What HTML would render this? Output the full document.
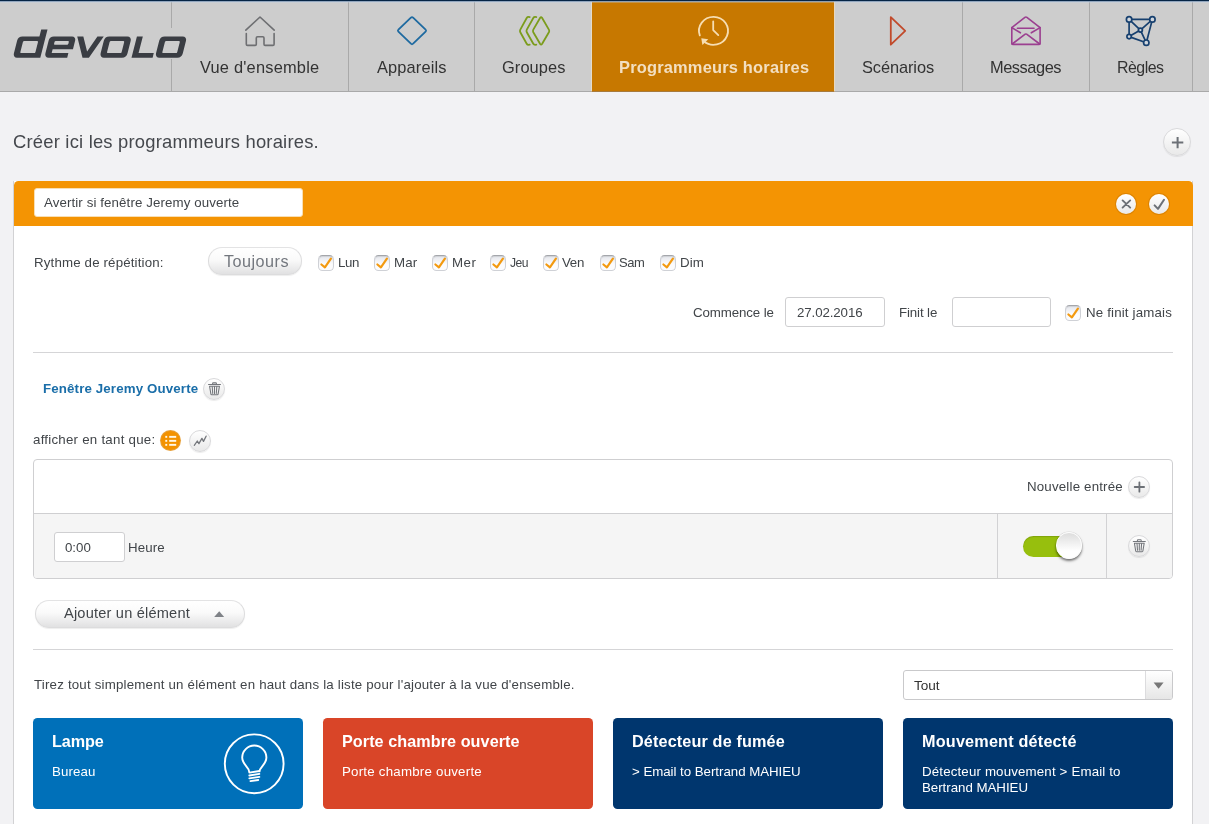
<!DOCTYPE html><html><head><meta charset="utf-8"><title>devolo</title><style>
*{box-sizing:border-box;margin:0;padding:0}
html,body{width:1209px;height:824px;overflow:hidden;background:#f2f2f4;font-family:"Liberation Sans",sans-serif}
.t{position:absolute;white-space:nowrap;will-change:transform}
.abs{position:absolute}
#nav{position:absolute;left:0;top:0;width:1209px;height:92px;background:#cdcdcd;border-bottom:1px solid #a9a9a9}
.sep{position:absolute;top:0;width:1px;height:91px;background:#a9a9a9}
#active{position:absolute;left:591px;top:0;width:244px;height:92px;background:#c77800;border-right:1px solid #e8d8bd;border-left:1px solid #e4dccd;border-bottom:1px solid #a87b3c}
#topline{position:absolute;left:0;top:0;width:1209px;height:3px;background:linear-gradient(#03203f 0,#0a2a4c 1.2px,rgba(190,208,230,.9) 1.6px,rgba(200,212,228,0) 3px)}
svg{position:absolute;overflow:visible}
.rb{position:absolute;border-radius:50%;background:linear-gradient(#ffffff,#e9e9e9);border:1px solid #d9d9db;box-shadow:0 1px 1px rgba(0,0,0,.08)}
#panel{position:absolute;left:13px;top:181px;width:1180px;height:660px;background:#fff;border:1px solid #d2d2d4;border-top:none}
#obar{position:absolute;left:13.5px;top:181.2px;width:1179px;height:44.6px;background:#f49403;border-radius:4.5px 4.5px 0 0}
.inp{position:absolute;background:#fff;border:1px solid #cfcfd1;border-radius:3px}
.cb{position:absolute;width:16px;height:16px;border-radius:4.5px;background:linear-gradient(#e4e6ec,#fcfcfd 60%);border:1px solid #cfd1d6;border-top-color:#a4a6ab;box-shadow:inset 0 1px 1px rgba(0,0,0,.10)}
.pill{position:absolute;border-radius:14.5px;background:linear-gradient(#ffffff,#fafafa 45%,#e1e1e2);border:1px solid #dcdcdd;border-top-color:#e3e3e4;box-shadow:0 1px 1px rgba(0,0,0,.07)}
.hr{position:absolute;height:1px;background:#d5d5d7;left:33px;width:1140px}
</style></head><body><div id="nav"></div><div id="active"></div><div class="sep" style="left:171px"></div><div class="sep" style="left:348px"></div><div class="sep" style="left:474px"></div><div class="sep" style="left:962px"></div><div class="sep" style="left:1089px"></div><div class="sep" style="left:1192px"></div><div id="topline"></div><span class="t" style="left:199.90px;top:56.92px;font-size:16.4px;line-height:21px;font-weight:400;color:#333333;letter-spacing:0.205px">Vue d&#x27;ensemble</span><span class="t" style="left:376.80px;top:56.92px;font-size:16.4px;line-height:21px;font-weight:400;color:#333333;letter-spacing:0.145px">Appareils</span><span class="t" style="left:501.90px;top:56.92px;font-size:16.4px;line-height:21px;font-weight:400;color:#333333;letter-spacing:0.087px">Groupes</span><span class="t" style="left:618.60px;top:56.92px;font-size:16.4px;line-height:21px;font-weight:700;color:#f3dfc0;letter-spacing:0.208px">Programmeurs horaires</span><span class="t" style="left:861.90px;top:56.92px;font-size:16.4px;line-height:21px;font-weight:400;color:#333333;letter-spacing:-0.099px">Scénarios</span><span class="t" style="left:990.20px;top:56.92px;font-size:16.4px;line-height:21px;font-weight:400;color:#333333;letter-spacing:-0.458px">Messages</span><span class="t" style="left:1117.20px;top:57.09px;font-size:15.91px;line-height:21px;font-weight:400;color:#333333;letter-spacing:-0.500px">Règles</span><div class="abs" style="left:150px;top:28px;width:40px;height:31px;background:#cdcdcd"></div><svg style="left:0;top:0" width="200" height="92"><g transform="translate(0,57.7) skewX(-14.3)" fill="#3a3d43" fill-rule="evenodd"><path d="M17 -21.3H34V-28.3H40.3V0H17A4.2 4.2 0 0 1 12.8 -4.2V-17.1A4.2 4.2 0 0 1 17 -21.3ZM20.099999999999998 -16.7H32.8A1.2 1.2 0 0 1 34 -15.5V-5.8A1.2 1.2 0 0 1 32.8 -4.6H20.099999999999998A1.2 1.2 0 0 1 18.9 -5.8V-15.5A1.2 1.2 0 0 1 20.099999999999998 -16.7Z"/><path d="M48.5 -21.3H66.6A4.2 4.2 0 0 1 70.8 -17.1V-8.5H50.5V-4.6H67.2V0H48.5A4.2 4.2 0 0 1 44.3 -4.2V-17.1A4.2 4.2 0 0 1 48.5 -21.3ZM51.5 -16.7H63.8A1.0 1.0 0 0 1 64.8 -15.7V-14.0A1.0 1.0 0 0 1 63.8 -13H51.5A1.0 1.0 0 0 1 50.5 -14.0V-15.7A1.0 1.0 0 0 1 51.5 -16.7Z"/><path d="M71.8 -21.3H77.9L85.5 -6.3L92 -21.3H98.3L88.9 0H82.5Z"/><path d="M103.9 -21.3H122.0A4.4 4.4 0 0 1 126.4 -16.9V-4.4A4.4 4.4 0 0 1 122.0 0H103.9A4.4 4.4 0 0 1 99.5 -4.4V-16.9A4.4 4.4 0 0 1 103.9 -21.3ZM106.8 -16.7H119.0A1.2 1.2 0 0 1 120.2 -15.5V-5.8A1.2 1.2 0 0 1 119.0 -4.6H106.8A1.2 1.2 0 0 1 105.6 -5.8V-15.5A1.2 1.2 0 0 1 106.8 -16.7Z"/><path d="M131.5 -21.3H137.4V-4.6H152.6V0H131.5Z"/><path d="M159.3 -21.3H177.29999999999998A4.4 4.4 0 0 1 181.7 -16.9V-4.4A4.4 4.4 0 0 1 177.29999999999998 0H159.3A4.4 4.4 0 0 1 154.9 -4.4V-16.9A4.4 4.4 0 0 1 159.3 -21.3ZM162.1 -16.7H174.60000000000002A1.2 1.2 0 0 1 175.8 -15.5V-5.8A1.2 1.2 0 0 1 174.60000000000002 -4.6H162.1A1.2 1.2 0 0 1 160.9 -5.8V-15.5A1.2 1.2 0 0 1 162.1 -16.7Z"/></g></svg><svg style="left:0;top:0" width="1209" height="92" fill="none" stroke-linecap="round" stroke-linejoin="round"><g stroke="#6e6f72" stroke-width="1.6"><path d="M245.8 30.2L260 17L274.2 30.2"/><path d="M246.3 33.6V44.2Q246.3 45.4 247.5 45.4H255.2Q256.3 45.4 256.3 44.3V38Q256.3 36.8 257.5 36.8H262.8Q264 36.8 264 38V44.3Q264 45.4 265.1 45.4H272.9Q274.1 45.4 274.1 44.2V33.6"/></g><path d="M410.9 17.7Q412 16.7 413.1 17.7L425.6 29.7Q426.6 30.7 425.6 31.7L413.1 43.7Q412 44.7 410.9 43.7L398.4 31.7Q397.4 30.7 398.4 29.7Z" stroke="#1e6aa0" stroke-width="1.8"/><g stroke="#7b9c1c" stroke-width="1.8"><path d="M540.2 17.8Q541.1 16.6 542 17.8L548.9 29.6Q549.6 30.9 548.9 32.2L542 44Q541.1 45.2 540.2 44L533.3 32.2Q532.6 30.9 533.3 29.6Z"/><path d="M536.3 17.1Q534.1 16.6 533.3 18L526.8 29.6Q526.1 30.9 526.8 32.2L533.3 43.8Q534.1 45.2 536.3 44.7"/><path d="M529.7 17.1Q527.5 16.6 526.7 18L520.3 29.6Q519.6 30.9 520.3 32.2L526.7 43.8Q527.5 45.2 529.7 44.7"/></g><g stroke="#f6ddb2" stroke-width="1.8"><path d="M699.8 35.4A14.5 14 0 1 1 703.9 41.3"/><path d="M713.2 21.3V30.1L718.3 35.1"/></g><path d="M701.3 38.3L708.3 39.2L702.4 45Z" fill="#f6ddb2"/><path d="M890.8 17.2V44.7L905.2 30.9Z" stroke="#c14a2b" stroke-width="1.8"/><g stroke="#9b3f90" stroke-width="1.6"><path d="M1011.8 27.6L1024.9 17.4Q1025.9 16.7 1026.9 17.4L1040.1 27.6V43.4Q1040.1 44.4 1039.1 44.4H1012.8Q1011.8 44.4 1011.8 43.4Z"/><path d="M1017.4 28.3H1034"/><path d="M1011.8 27.6L1020.4 32.8M1040.1 27.6L1031.3 32.8"/><path d="M1012.2 44L1025.2 34.2Q1025.9 33.7 1026.6 34.2L1039.7 44"/></g><g stroke="#17406f" stroke-width="1.7"><path d="M1129.1 19.4H1152.4M1129.1 19.4V36.6M1129.1 19.4L1140.4 30.1M1152.4 19.4L1140.4 30.1M1152.4 19.4L1146.3 42.7M1129.1 36.6L1140.4 30.1M1129.1 36.6L1146.3 42.7M1140.4 30.1L1146.3 42.7"/><g fill="#cfd5dc"><circle cx="1129.1" cy="19.4" r="2.7"/><circle cx="1152.4" cy="19.4" r="2.7"/><circle cx="1129.1" cy="36.6" r="2.2"/><circle cx="1146.3" cy="42.7" r="2.7"/><circle cx="1140.4" cy="30.1" r="2.0"/></g></g></svg><span class="t" style="left:13.20px;top:129.72px;font-size:18.4px;line-height:24px;font-weight:400;color:#45484d;letter-spacing:0.207px">Créer ici les programmeurs horaires.</span><div class="rb" style="left:1163.3px;top:128.1px;width:28px;height:28px"></div><svg style="left:1163px;top:128px" width="28" height="28"><path d="M14.6 8.9v11.4M8.9 14.6h11.4" stroke="#6c7076" stroke-width="2" fill="none"/></svg><div id="panel"></div><div id="obar"></div><div class="abs" style="left:33.6px;top:187.5px;width:269.4px;height:29.3px;background:#fff;border-radius:3px;border:1px solid #f8dfb4"></div><span class="t" style="left:44.40px;top:194.19px;font-size:13.3px;line-height:17px;font-weight:400;color:#414549;letter-spacing:0.103px">Avertir si fenêtre Jeremy ouverte</span><div class="rb" style="left:1116.3px;top:194.0px;width:20px;height:20px;border:none;box-shadow:0 0 0 1px rgba(190,110,0,.45)"></div><div class="rb" style="left:1149.4px;top:194.0px;width:20px;height:20px;border:none;box-shadow:0 0 0 1px rgba(190,110,0,.45)"></div><svg style="left:0;top:0" width="1209" height="824" fill="none" stroke-linecap="round" stroke-linejoin="round" ><g stroke="#6c7076" stroke-width="1.9"><path d="M1122.6 200.4L1130.2 207.6M1130.2 200.4L1122.6 207.6"/><path d="M1154.6 205.4L1158 208.9L1164 199.8" stroke-width="2"/></g></svg><span class="t" style="left:33.70px;top:253.89px;font-size:13.3px;line-height:17px;font-weight:400;color:#414549;letter-spacing:0.155px">Rythme de répétition:</span><div class="pill" style="left:208.2px;top:246.6px;width:93.7px;height:28.4px"></div><span class="t" style="left:223.50px;top:250.69px;font-size:16.2px;line-height:21px;font-weight:400;color:#73777e;letter-spacing:0.473px">Toujours</span><div class="cb" style="left:317.5px;top:255.3px"></div><svg style="left:317.5px;top:255.3px" width="16" height="16" fill="none"><path d="M3.4 9.5L6.9 12.3L12.9 3.7" stroke="#f39a10" stroke-width="2.2" stroke-linejoin="round" stroke-linecap="round"/></svg><span class="t" style="left:338.20px;top:253.79px;font-size:13.3px;line-height:17px;font-weight:400;color:#414549;letter-spacing:-0.444px">Lun</span><div class="cb" style="left:374px;top:255.3px"></div><svg style="left:374px;top:255.3px" width="16" height="16" fill="none"><path d="M3.4 9.5L6.9 12.3L12.9 3.7" stroke="#f39a10" stroke-width="2.2" stroke-linejoin="round" stroke-linecap="round"/></svg><span class="t" style="left:394.30px;top:253.79px;font-size:13.3px;line-height:17px;font-weight:400;color:#414549;letter-spacing:0.097px">Mar</span><div class="cb" style="left:432px;top:255.3px"></div><svg style="left:432px;top:255.3px" width="16" height="16" fill="none"><path d="M3.4 9.5L6.9 12.3L12.9 3.7" stroke="#f39a10" stroke-width="2.2" stroke-linejoin="round" stroke-linecap="round"/></svg><span class="t" style="left:452.00px;top:253.79px;font-size:13.3px;line-height:17px;font-weight:400;color:#414549;letter-spacing:0.547px">Mer</span><div class="cb" style="left:489.6px;top:255.3px"></div><svg style="left:489.6px;top:255.3px" width="16" height="16" fill="none"><path d="M3.4 9.5L6.9 12.3L12.9 3.7" stroke="#f39a10" stroke-width="2.2" stroke-linejoin="round" stroke-linecap="round"/></svg><span class="t" style="left:509.60px;top:254.69px;font-size:12.15px;line-height:16px;font-weight:400;color:#414549;letter-spacing:-0.500px">Jeu</span><div class="cb" style="left:543.2px;top:255.3px"></div><svg style="left:543.2px;top:255.3px" width="16" height="16" fill="none"><path d="M3.4 9.5L6.9 12.3L12.9 3.7" stroke="#f39a10" stroke-width="2.2" stroke-linejoin="round" stroke-linecap="round"/></svg><span class="t" style="left:562.40px;top:253.79px;font-size:13.3px;line-height:17px;font-weight:400;color:#414549;letter-spacing:-0.269px">Ven</span><div class="cb" style="left:600.3px;top:255.3px"></div><svg style="left:600.3px;top:255.3px" width="16" height="16" fill="none"><path d="M3.4 9.5L6.9 12.3L12.9 3.7" stroke="#f39a10" stroke-width="2.2" stroke-linejoin="round" stroke-linecap="round"/></svg><span class="t" style="left:619.20px;top:253.90px;font-size:12.99px;line-height:17px;font-weight:400;color:#414549;letter-spacing:-0.500px">Sam</span><div class="cb" style="left:659.5px;top:255.3px"></div><svg style="left:659.5px;top:255.3px" width="16" height="16" fill="none"><path d="M3.4 9.5L6.9 12.3L12.9 3.7" stroke="#f39a10" stroke-width="2.2" stroke-linejoin="round" stroke-linecap="round"/></svg><span class="t" style="left:679.80px;top:253.79px;font-size:13.3px;line-height:17px;font-weight:400;color:#414549;letter-spacing:0.080px">Dim</span><span class="t" style="left:693.20px;top:303.99px;font-size:13.3px;line-height:17px;font-weight:400;color:#414549;letter-spacing:-0.103px">Commence le</span><div class="inp" style="left:785.4px;top:297.4px;width:99.3px;height:29.4px"></div><span class="t" style="left:796.80px;top:303.99px;font-size:13.3px;line-height:17px;font-weight:400;color:#414549;letter-spacing:-0.107px">27.02.2016</span><span class="t" style="left:899.40px;top:303.99px;font-size:13.3px;line-height:17px;font-weight:400;color:#414549;letter-spacing:-0.125px">Finit le</span><div class="inp" style="left:952.2px;top:297.4px;width:99.3px;height:29.4px"></div><div class="cb" style="left:1065px;top:305.2px"></div><svg style="left:1065px;top:305.2px" width="16" height="16" fill="none"><path d="M3.4 9.5L6.9 12.3L12.9 3.7" stroke="#f39a10" stroke-width="2.2" stroke-linejoin="round" stroke-linecap="round"/></svg><span class="t" style="left:1086.30px;top:303.79px;font-size:13.3px;line-height:17px;font-weight:400;color:#414549;letter-spacing:0.163px">Ne finit jamais</span><div class="hr" style="top:352px"></div><span class="t" style="left:42.80px;top:379.89px;font-size:13.3px;line-height:17px;font-weight:700;color:#1a6ea9;letter-spacing:0.135px">Fenêtre Jeremy Ouverte</span><div class="rb" style="left:203.4px;top:377.8px;width:22px;height:22px;"></div><span class="t" style="left:32.90px;top:431.49px;font-size:13.3px;line-height:17px;font-weight:400;color:#414549;letter-spacing:0.240px">afficher en tant que:</span><div class="abs" style="left:161.2px;top:431.2px;width:19.2px;height:19.2px;border-radius:50%;background:#f39200;box-shadow:0 0 0 1px rgba(225,135,5,.8)"></div><div class="rb" style="left:188.7px;top:429.8px;width:22px;height:22px;"></div><svg style="left:0;top:0" width="1209" height="824" fill="none" stroke-linecap="round" stroke-linejoin="round" ><g stroke="#73767b" stroke-width="1.05" transform="translate(214.5,388.8)"><path d="M-6 -4.3H6"/><path d="M-1.9 -4.6V-5.3Q-1.9 -5.9 -1.3 -5.9H1.3Q1.9 -5.9 1.9 -5.3V-4.6"/><path d="M-4.9 -2.5L-3.6 5.3Q-3.5 6 -2.8 6H2.8Q3.5 6 3.6 5.3L4.9 -2.5Z"/><path d="M-2.3 -2.2L-1.8 4.6M0 -2.2V4.6M2.3 -2.2L1.8 4.6"/></g><g fill="#fff7e6"><rect x="165.3" y="435.9" width="1.9" height="1.9"/><rect x="169.2" y="435.9" width="7" height="1.9"/><rect x="165.3" y="439.9" width="1.9" height="1.9"/><rect x="169.2" y="439.9" width="7" height="1.9"/><rect x="165.3" y="443.9" width="1.9" height="1.9"/><rect x="169.2" y="443.9" width="7" height="1.9"/></g><path d="M194.3 445.3L197.3 441L198.9 443.6L201.9 438.4L203.5 441.4L206.1 436.2" stroke="#74777c" stroke-width="1.3"/></svg><div class="abs" style="left:33px;top:459px;width:1140px;height:120px;border:1px solid #cfcfd1;border-radius:4px;background:#fff;overflow:hidden"><div class="abs" style="left:0;top:53px;width:1138px;height:65px;background:#f5f5f5;border-top:1px solid #cfcfd1"></div><div class="abs" style="left:963px;top:54px;width:1px;height:65px;background:#d2d2d4"></div><div class="abs" style="left:1072px;top:54px;width:1px;height:65px;background:#d2d2d4"></div></div><span class="t" style="left:1026.90px;top:477.89px;font-size:13.3px;line-height:17px;font-weight:400;color:#414549;letter-spacing:0.183px">Nouvelle entrée</span><div class="rb" style="left:1128.2px;top:476.0px;width:22px;height:22px;"></div><div class="inp" style="left:54.3px;top:532.3px;width:70.5px;height:29.5px"></div><span class="t" style="left:64.60px;top:539.09px;font-size:13.3px;line-height:17px;font-weight:400;color:#414549;letter-spacing:-0.030px">0:00</span><span class="t" style="left:128.40px;top:539.09px;font-size:13.3px;line-height:17px;font-weight:400;color:#414549;letter-spacing:0.120px">Heure</span><div class="abs" style="left:1022.5px;top:535.5px;width:58px;height:21.3px;border-radius:11px;background:#97bf0d;box-shadow:inset 0 1px 1px rgba(60,80,0,.25)"></div><div class="abs" style="left:1055.8px;top:532.2px;width:26.6px;height:26.6px;border-radius:50%;background:linear-gradient(#dddddd,#ffffff 72%);border:1.3px solid #fdfdfd;box-shadow:0 2px 2.5px rgba(0,0,0,.5),0 0 0 .5px rgba(0,0,0,.10)"></div><div class="rb" style="left:1128.2px;top:534.7px;width:22px;height:22px;"></div><svg style="left:0;top:0" width="1209" height="824" fill="none" stroke-linecap="round" stroke-linejoin="round" ><path d="M1134.7 487H1144.1M1139.4 482.3V491.7" stroke="#6c7076" stroke-width="1.8"/><g stroke="#73767b" stroke-width="1.05" transform="translate(1139.3,545.7)"><path d="M-6 -4.3H6"/><path d="M-1.9 -4.6V-5.3Q-1.9 -5.9 -1.3 -5.9H1.3Q1.9 -5.9 1.9 -5.3V-4.6"/><path d="M-4.9 -2.5L-3.6 5.3Q-3.5 6 -2.8 6H2.8Q3.5 6 3.6 5.3L4.9 -2.5Z"/><path d="M-2.3 -2.2L-1.8 4.6M0 -2.2V4.6M2.3 -2.2L1.8 4.6"/></g></svg><div class="pill" style="left:34.5px;top:600px;width:210.5px;height:28px"></div><span class="t" style="left:63.90px;top:604.14px;font-size:14.6px;line-height:19px;font-weight:400;color:#414549;letter-spacing:0.193px">Ajouter un élément</span><svg style="left:0;top:0" width="1209" height="824" fill="none" stroke-linecap="round" stroke-linejoin="round" ><path d="M214.2 617L219.2 611.2L224.2 617Z" fill="#7f8287"/></svg><div class="hr" style="top:649px"></div><span class="t" style="left:33.70px;top:675.69px;font-size:13.3px;line-height:17px;font-weight:400;color:#414549;letter-spacing:0.191px">Tirez tout simplement un élément en haut dans la liste pour l&#x27;ajouter à la vue d&#x27;ensemble.</span><div class="inp" style="left:903px;top:670px;width:270px;height:29.6px;border-color:#c9c9cb;overflow:hidden"><div class="abs" style="left:240.5px;top:0;width:28px;height:28px;background:linear-gradient(#ffffff,#e6e6e6);border-left:1px solid #dcdcde"></div></div><span class="t" style="left:913.70px;top:676.59px;font-size:13.6px;line-height:18px;font-weight:400;color:#333;letter-spacing:-0.034px">Tout</span><svg style="left:0;top:0" width="1209" height="824" fill="none" stroke-linecap="round" stroke-linejoin="round" ><path d="M1153.6 682.6H1163.6L1158.6 688.8Z" fill="#777"/></svg><div class="abs" style="left:33.2px;top:718px;width:269.8px;height:90.6px;border-radius:4.5px;background:#0070b9"></div><div class="abs" style="left:323.2px;top:718px;width:269.8px;height:90.6px;border-radius:4.5px;background:#d94528"></div><div class="abs" style="left:613.2px;top:718px;width:269.8px;height:90.6px;border-radius:4.5px;background:#00366e"></div><div class="abs" style="left:903.2px;top:718px;width:269.8px;height:90.6px;border-radius:4.5px;background:#00366e"></div><span class="t" style="left:52.30px;top:730.69px;font-size:16.2px;line-height:21px;font-weight:700;color:#ffffff;letter-spacing:-0.122px">Lampe</span><span class="t" style="left:52.30px;top:763.39px;font-size:13.3px;line-height:17px;font-weight:400;color:#ffffff;letter-spacing:0.122px">Bureau</span><span class="t" style="left:342.30px;top:730.69px;font-size:16.2px;line-height:21px;font-weight:700;color:#ffffff;letter-spacing:0.059px">Porte chambre ouverte</span><span class="t" style="left:342.30px;top:763.39px;font-size:13.3px;line-height:17px;font-weight:400;color:#ffffff;letter-spacing:0.222px">Porte chambre ouverte</span><span class="t" style="left:632.30px;top:730.69px;font-size:16.2px;line-height:21px;font-weight:700;color:#ffffff;letter-spacing:0.145px">Détecteur de fumée</span><span class="t" style="left:632.30px;top:763.39px;font-size:13.3px;line-height:17px;font-weight:400;color:#ffffff;letter-spacing:-0.036px">&gt; Email to Bertrand MAHIEU</span><span class="t" style="left:922.30px;top:730.69px;font-size:16.2px;line-height:21px;font-weight:700;color:#ffffff;letter-spacing:0.205px">Mouvement détecté</span><span class="t" style="left:922.30px;top:763.39px;font-size:13.3px;line-height:17px;font-weight:400;color:#ffffff;letter-spacing:0.155px">Détecteur mouvement &gt; Email to</span><span class="t" style="left:922.30px;top:779.29px;font-size:13.3px;line-height:17px;font-weight:400;color:#ffffff;letter-spacing:-0.030px">Bertrand MAHIEU</span><svg style="left:0;top:0" width="1209" height="824" fill="none" stroke-linecap="round" stroke-linejoin="round" ><g stroke="#fff" stroke-width="1.9"><circle cx="254.2" cy="763.8" r="29.4"/><path d="M249.1 771.4C249.1 767.3 242.2 764.6 242.2 757.6A12.1 12.1 0 0 1 266.4 757.6C266.4 764.6 259.5 767.3 259.5 771.4"/><path d="M249.3 772.6L259.4 771M249.3 775.5L259.4 773.9M249.3 778.4L259.4 776.8M250.4 781.2L258.3 780" stroke-width="1.8"/></g></svg></body></html>
